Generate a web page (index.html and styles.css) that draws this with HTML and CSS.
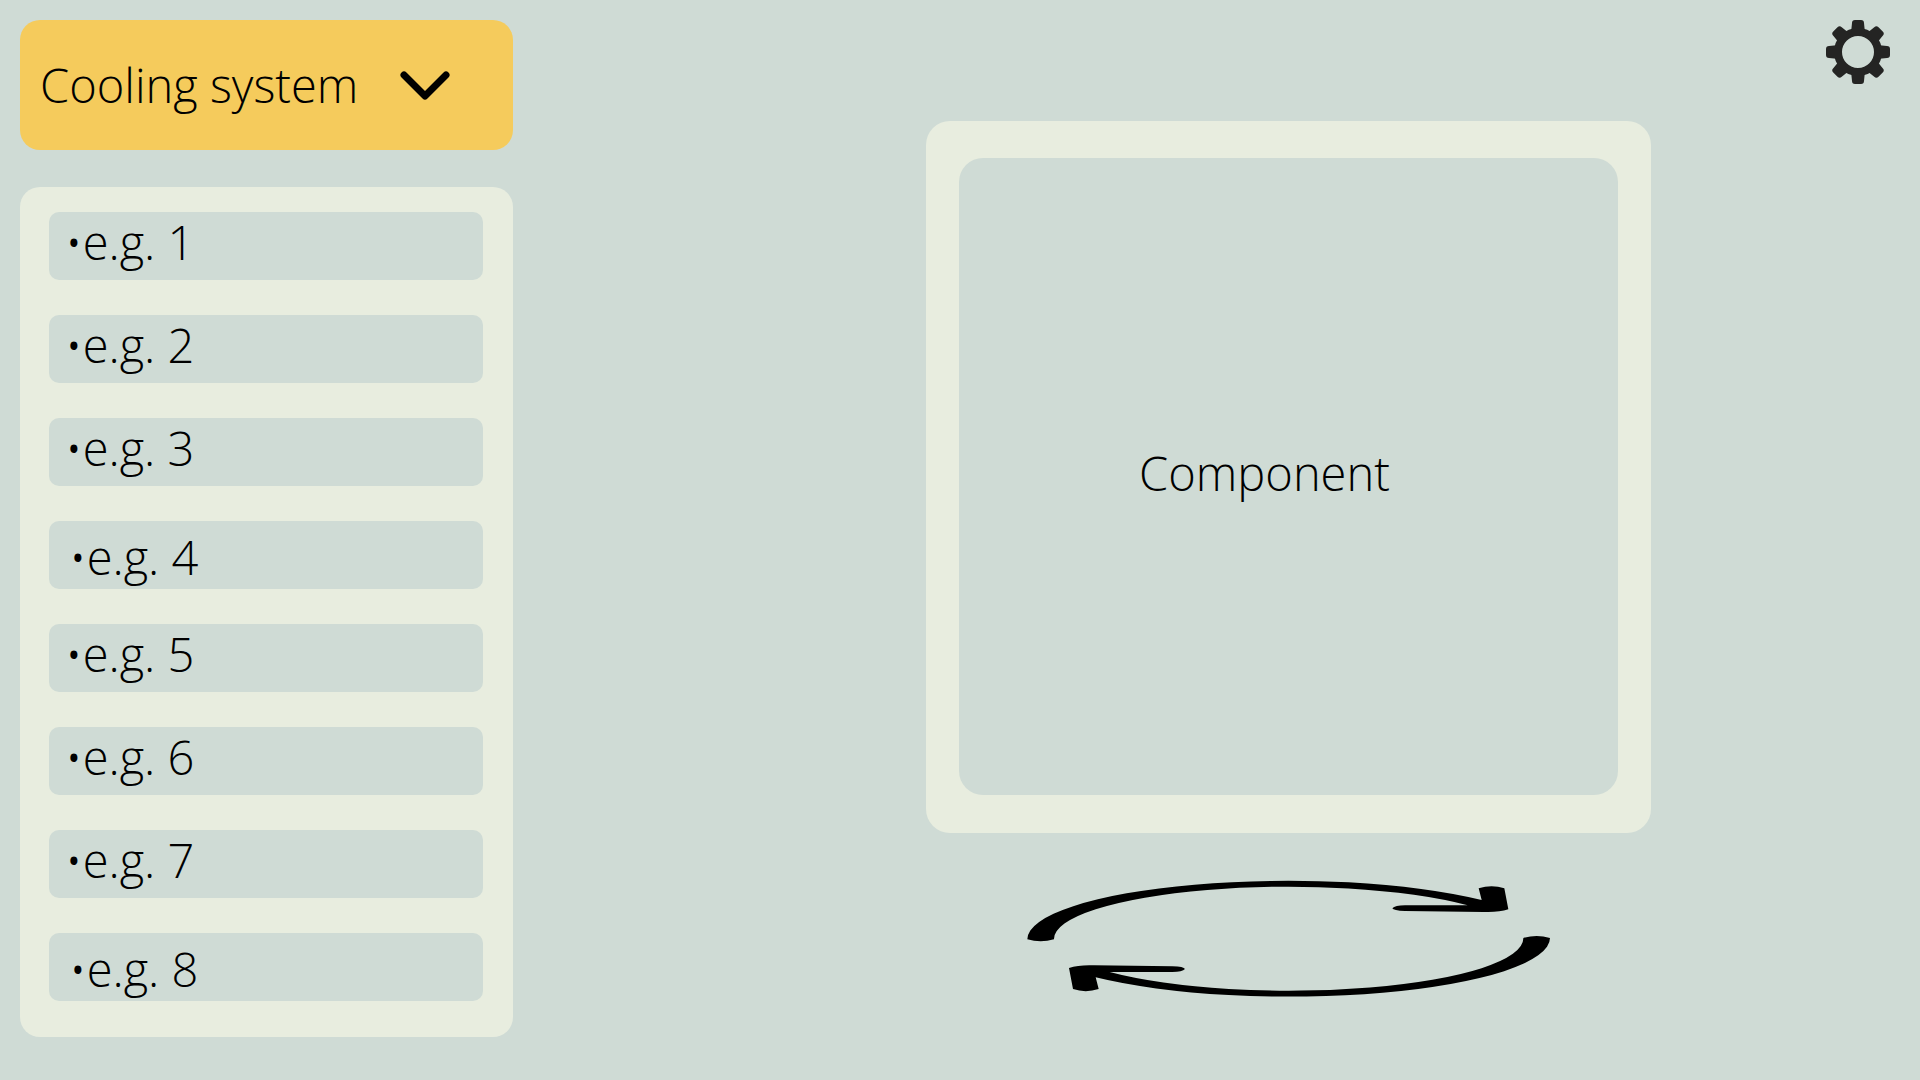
FILE: index.html
```html
<!DOCTYPE html>
<html lang="en">
<head>
<meta charset="utf-8">
<meta name="viewport" content="width=device-width, initial-scale=1">
<title>Cooling system</title>
<link rel="stylesheet" href="styles.css">
</head>
<body>
<div class="app">
  <aside class="sidebar">
    <div class="system">
      <select class="system-select" aria-label="System">
        <option>Cooling system</option>
      </select>
      <svg class="system-chevron" viewBox="0 0 50 29" aria-hidden="true"><path d="M4 4 25 25 46 4"/></svg>
    </div>
    <ul class="parts">
      <li><button class="part" type="button">•e.g. 1</button></li>
      <li><button class="part" type="button">•e.g. 2</button></li>
      <li><button class="part" type="button">•e.g. 3</button></li>
      <li><button class="part part-low" type="button">•e.g. 4</button></li>
      <li><button class="part" type="button">•e.g. 5</button></li>
      <li><button class="part" type="button">•e.g. 6</button></li>
      <li><button class="part" type="button">•e.g. 7</button></li>
      <li><button class="part part-low" type="button">•e.g. 8</button></li>
    </ul>
  </aside>

  <main class="stage">
    <section class="viewer">
      <div class="viewer-screen"><p class="viewer-label">Component</p></div>
    </section>
    <button class="rotate" type="button" aria-label="Rotate component">
      <svg class="rotate-icon" viewBox="81 60 1569 351" aria-hidden="true">
        <path id="arrow" d="M82 238A783 176 0 0 1 1445 120L1436 85Q1475 72 1513 85L1525 148Q1495 158 1450 156L1215 153Q1180 152 1177 145Q1185 136 1215 136L1403 136A703 157 0 0 0 162 238Q122 250 82 238Z"/>
        <use href="#arrow" transform="rotate(180 866 236)"/>
      </svg>
    </button>
  </main>

  <button class="settings" type="button" aria-label="Settings">
    <svg class="settings-icon" viewBox="0 0 64 64" aria-hidden="true">
      <defs>
        <path id="tooth" d="M25 13 26 3Q26 0 29 0H35Q38 0 38 3L39 13Z"/>
      </defs>
      <circle cx="32" cy="32" r="20" fill="none" stroke="#242423" stroke-width="8"/>
      <use href="#tooth"/>
      <use href="#tooth" transform="rotate(45 32 32)"/>
      <use href="#tooth" transform="rotate(90 32 32)"/>
      <use href="#tooth" transform="rotate(135 32 32)"/>
      <use href="#tooth" transform="rotate(180 32 32)"/>
      <use href="#tooth" transform="rotate(225 32 32)"/>
      <use href="#tooth" transform="rotate(270 32 32)"/>
      <use href="#tooth" transform="rotate(315 32 32)"/>
    </svg>
  </button>
</div>
</body>
</html>
```
FILE: styles.css
```css
* {
  box-sizing: border-box;
}

body {
  margin: 0;
  background: #cfdbd5;
  color: #000;
  font-family: "Open Sans", "Noto Sans", sans-serif;
  font-size: 47px;
  font-weight: 300;
  line-height: 64px;
}

button,
select {
  border: 0;
  padding: 0;
  background: none;
  color: inherit;
  font: inherit;
  cursor: pointer;
}

svg {
  display: block;
}

.app {
  display: grid;
  grid-template-columns: 493px 1fr 64px;
  align-items: start;
  padding: 20px 30px 43px 20px;
}

.sidebar {
  display: grid;
  gap: 37px;
}

.system {
  display: grid;
  align-items: center;
  height: 130px;
  border-radius: 20px;
  background: #f5cb5c;
}

.system-select,
.system-chevron {
  grid-area: 1 / 1;
}

.system-select {
  appearance: none;
  width: 100%;
  height: 100%;
  padding: 0 20px;
  border-radius: 20px;
}

.system-chevron {
  justify-self: end;
  width: 50px;
  margin-right: 63px;
  fill: none;
  stroke: #000;
  stroke-width: 7;
  stroke-linecap: round;
  stroke-linejoin: round;
  pointer-events: none;
}

.parts {
  display: grid;
  gap: 35px;
  margin: 0;
  padding: 25px 30px 36px 29px;
  border-radius: 20px;
  background: #e8eddf;
  list-style: none;
}

.part {
  display: block;
  width: 100%;
  height: 68px;
  padding: 0 16px 8px;
  border-radius: 10px;
  background: #cfdbd5;
  line-height: 56px;
  text-align: left;
}

.part-low {
  padding: 4px 20px 0;
}

.stage {
  display: grid;
  justify-items: center;
  gap: 47px;
  padding: 101px 0 0 238px;
}

.viewer {
  width: 100%;
  max-width: 725px;
  padding: 37px 33px 38px;
  border-radius: 24px;
  background: #e8eddf;
}

.viewer-screen {
  display: grid;
  place-items: center;
  aspect-ratio: 659 / 637;
  padding: 0 48px 8px 0;
  border-radius: 24px;
  background: #cfdbd5;
}

.viewer-label {
  margin: 0;
}

.rotate {
  width: 100%;
  max-width: 523px;
}

.rotate-icon {
  width: 100%;
}

.settings-icon {
  width: 64px;
  fill: #242423;
}
```
